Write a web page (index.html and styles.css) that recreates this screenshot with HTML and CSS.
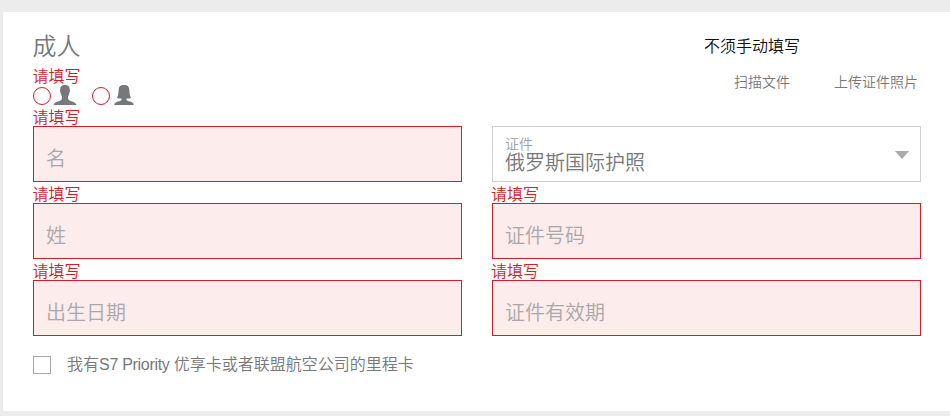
FILE: index.html
```html
<!DOCTYPE html>
<html lang="zh-CN">
<head>
<meta charset="utf-8">
<title>成人</title>
<link rel="stylesheet" href="styles.css">
</head>
<body>
<main class="card">
  <header class="head">
    <div class="person">
      <h1 class="title">成人</h1>
      <div class="error">请填写</div>
      <div class="genders">
        <span class="radio"></span>
        <svg class="avatar male" width="24" height="20" viewBox="0 0 24 20"><path d="M12 0C9 0 7.300 1 7.300 4.500c-.5.500-.3 2.700.3 3 .2 1.700.7 2.900 1.300 3.700v2.800c-.5 1.300-1.900 1.800-4 2.500C2.900 17.200 1.100 18 .400 20h23.200c-.7-2-2.500-2.800-4.500-3.500-2.100-.7-3.500-1.200-4-2.500v-2.800c.6-.8 1.100-2 1.300-3.700.6-.3.800-2.500.3-3C16.700 1 15 0 12 0z"/></svg>
        <span class="radio second"></span>
        <svg class="avatar female" width="20" height="20" viewBox="0 0 20 20"><path d="M10 0C6 0 4.800 1.800 4.600 5.500 4.500 9 4.100 11 3 12.700c1.300.8 2.900.9 4.500.8v1.500c-.7.900-2 1.200-3.500 1.600C1.800 17.200.500 18 .200 20h19.600c-.3-2-1.600-2.800-3.800-3.400-1.500-.4-2.800-.7-3.500-1.600v-1.500c1.600.1 3.200 0 4.500-.8-1.100-1.700-1.500-3.700-1.600-7.200C15.200 1.800 14 0 10 0z"/></svg>
      </div>
      <div class="error">请填写</div>
    </div>
    <div class="autofill">
      <div class="autofill-title">不须手动填写</div>
      <div class="links"><span>扫描文件</span><span>上传证件照片</span></div>
    </div>
  </header>
  <section class="fields">
    <div class="field invalid">名</div>
    <div class="field select">
      <div class="value-group"><div class="caption">证件</div><div class="value">俄罗斯国际护照</div></div>
      <svg class="arrow" width="14" height="8" viewBox="0 0 14 8"><path d="M0 0h14L7 8z"/></svg>
    </div>
    <div class="group"><div class="error">请填写</div><div class="field invalid">姓</div></div>
    <div class="group"><div class="error shifted">请填写</div><div class="field invalid">证件号码</div></div>
    <div class="group"><div class="error">请填写</div><div class="field invalid">出生日期</div></div>
    <div class="group"><div class="error shifted">请填写</div><div class="field invalid">证件有效期</div></div>
  </section>
  <label class="loyalty"><span class="checkbox"></span><span>我有<span class="latin">S7 Priority </span>优享卡或者联盟航空公司的里程卡</span></label>
</main>
</body>
</html>
```
FILE: styles.css
```css
* {
  box-sizing: border-box;
}

body {
  margin: 0;
  padding: 12px 0 5px 3px;
  height: 416px;
  overflow: hidden;
  background: #ececec;
  color: #76787b;
  font-family: "Liberation Sans", "Noto Sans CJK SC", sans-serif;
  font-weight: 350;
}

.card {
  height: 399px;
  padding: 0 29px 0 30px;
  background: #fff;
}

.head {
  display: flex;
  justify-content: space-between;
  height: 114px;
}

.title {
  margin: 0 0 0 -0.5px;
  padding-top: 19px;
  height: 52px;
  font-size: 24px;
  font-weight: 350;
  line-height: 32px;
}

.error {
  height: 21px;
  margin-left: -0.4px;
  color: #d51c29;
  font-size: 16px;
  line-height: 25px;
}

.shifted {
  margin-left: -1px;
}

.genders {
  display: flex;
  height: 20px;
}

.radio {
  width: 18px;
  height: 18px;
  margin-top: 2px;
  border: 1px solid #d51c29;
  border-radius: 50%;
}

.second {
  margin-left: 15px;
}

.avatar {
  fill: #76787b;
}

.male {
  margin-left: 2px;
}

.female {
  margin-left: 4px;
}

.autofill {
  width: 217px;
  padding-top: 24px;
}

.autofill-title {
  height: 35px;
  color: #111;
  font-size: 16px;
  line-height: 22px;
}

.links {
  display: flex;
  gap: 44px;
  padding-left: 30px;
  font-size: 14px;
  line-height: 22px;
}

.fields {
  display: grid;
  grid-template-columns: 429px 429px;
  column-gap: 30px;
}

.field {
  height: 56px;
  padding: 17px 12px 0;
  border: 1px solid #d1d1d1;
  font-size: 20px;
  line-height: 30px;
}

.invalid {
  border-color: #d51c29;
  background: #fdecec;
  color: #a8a8aa;
}

.select {
  display: flex;
  justify-content: space-between;
  padding: 7px 11px 0 12px;
}

.caption {
  height: 16px;
  color: #a0a0a2;
  font-size: 14px;
  line-height: 20px;
}

.value {
  line-height: 26px;
}

.arrow {
  margin-top: 17px;
  fill: #aaa;
}

.loyalty {
  display: flex;
  gap: 16px;
  margin-top: 18px;
  font-size: 16px;
  line-height: 22px;
}

.latin {
  letter-spacing: -0.3px;
}

.checkbox {
  width: 18px;
  height: 18px;
  margin-top: 2px;
  border: 1px solid #a8a8a8;
}
```
